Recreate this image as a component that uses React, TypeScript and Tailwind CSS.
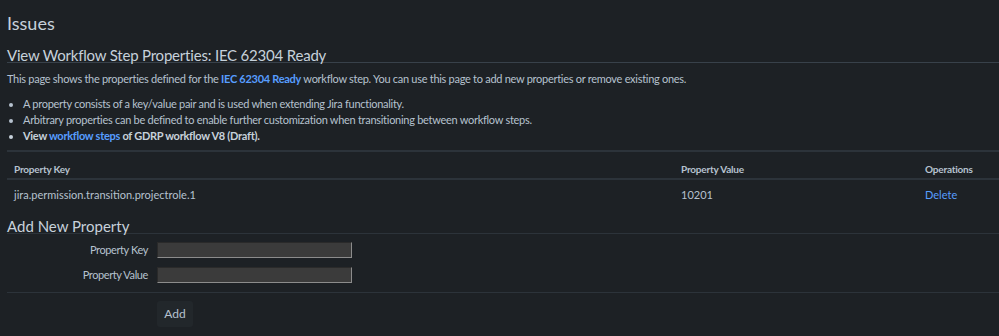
export default function App() {
  return (
    <div className="min-h-[336px] w-[999px] overflow-hidden bg-[#1d2125] pl-[7px] text-[11px] text-[#b6c2cf] font-['Lato',sans-serif]">
      <h1 className="pt-[11px] text-[18px] leading-[24px] text-[#c7d1db]">Issues</h1>

      <h2 className="mt-[12px] h-[16px] border-b border-[#38414a] text-[15px] leading-[16px] tracking-[-0.2px] text-[#c7d1db]">
        View Workflow Step Properties: IEC 62304 Ready
      </h2>

      <p className="mt-[8px] leading-[16px] tracking-[-0.28px]">
        This page shows the properties defined for the{" "}
        <a className="font-bold text-[#579dff]">IEC 62304 Ready</a> workflow step. You can use this page to add new properties or remove existing ones.
      </p>

      <ul className="mt-[9px] list-disc pl-[16px] leading-[16px] tracking-[-0.28px]">
        <li>A property consists of a key/value pair and is used when extending Jira functionality.</li>
        <li>Arbitrary properties can be defined to enable further customization when transitioning between workflow steps.</li>
        <li className="font-bold text-[#c7d1db]">
          View <a className="text-[#579dff]">workflow steps</a> of GDRP workflow V8 (Draft).
        </li>
      </ul>

      <div className="mt-[6px] h-[2px] bg-[#2c333a]" />

      <table className="mt-[4px] w-full border-collapse">
        <thead>
          <tr className="border-b-2 border-[#2c333a] text-left text-[10px] leading-[14px] tracking-[-0.2px] text-[#b6c2cf]">
            <th className="h-[23px] pl-[7px] pt-[6px] align-top font-bold">Property Key</th>
            <th className="w-[244px] pt-[6px] align-top font-bold">Property Value</th>
            <th className="w-[74px] pt-[6px] align-top font-bold">Operations</th>
          </tr>
        </thead>
        <tbody>
          <tr className="text-[11px] leading-[14px]">
            <td className="h-[30px] pl-[7px] pt-[8px] align-top">jira.permission.transition.projectrole.1</td>
            <td className="pt-[8px] align-top">10201</td>
            <td className="pt-[8px] align-top">
              <a className="text-[#579dff]">Delete</a>
            </td>
          </tr>
        </tbody>
      </table>

      <h3 className="mt-[9px] h-[16px] border-b border-[#2c333a] text-[15px] leading-[16px] text-[#c7d1db]">
        Add New Property
      </h3>

      <div className="mt-[8px] flex flex-col gap-[9px] tracking-[-0.4px]">
        <div className="flex h-[16px] items-center">
          <label className="w-[141px] text-right">Property Key</label>
          <input className="ml-[9px] h-[16px] w-[195px] border border-t-[#2a2a2a] border-l-[#2a2a2a] border-b-[#8c8c8c] border-r-[#8c8c8c] bg-[#3b3b3b]" />
        </div>
        <div className="flex h-[16px] items-center">
          <label className="w-[141px] text-right">Property Value</label>
          <input className="ml-[9px] h-[16px] w-[195px] border border-t-[#2a2a2a] border-l-[#2a2a2a] border-b-[#8c8c8c] border-r-[#8c8c8c] bg-[#3b3b3b]" />
        </div>
      </div>

      <div className="mt-[9px] h-px bg-[#2c333a]" />

      <div className="mt-[8px] pl-[150px]">
        <button className="h-[26px] w-[36px] rounded-[3px] bg-[#22272b] text-[12px] text-[#b6c2cf]">Add</button>
      </div>
    </div>
  );
}
